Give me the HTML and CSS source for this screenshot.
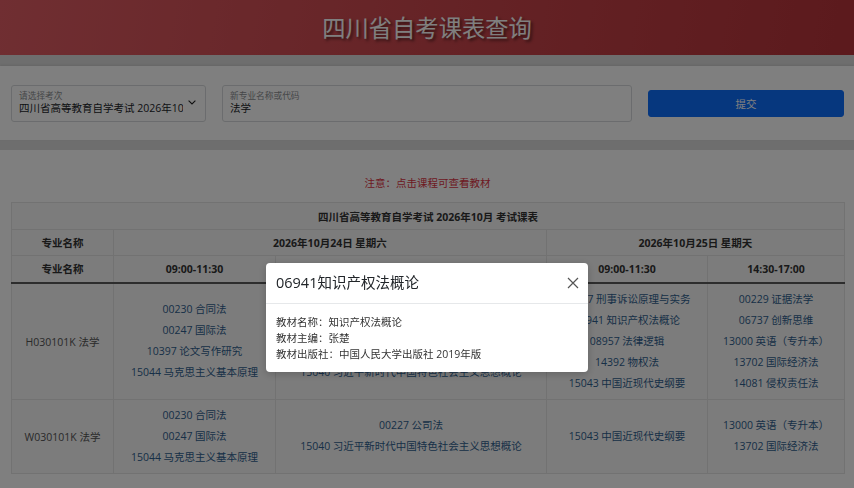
FILE: index.html
```html
<!DOCTYPE html>
<html lang="zh-CN">
<head>
<meta charset="utf-8">
<title>四川省自考课表查询</title>
<link rel="stylesheet" href="styles.css">
</head>
<body>
<header class="topbar">
  <h1 class="site-title">四川省自考课表查询</h1>
</header>

<section class="search-panel">
  <div class="field field-select">
    <span class="field-label">请选择考次</span>
    <span class="field-value select-value">四川省高等教育自学考试 2026年10月</span>
    <svg class="chevron" viewBox="0 0 8 5" width="8" height="5"><path d="M0.6 0.6 L4 4 L7.4 0.6" fill="none" stroke="#222" stroke-width="1.1"/></svg>
  </div>
  <div class="field field-input">
    <span class="field-label">新专业名称或代码</span>
    <span class="field-value">法学</span>
  </div>
  <button class="submit-btn" type="button">提交</button>
</section>

<main class="content">
  <p class="notice">注意：点击课程可查看教材</p>
  <table class="schedule">
    <colgroup>
      <col class="c-major"><col class="c-d1a"><col class="c-d1b"><col class="c-d2a"><col class="c-d2b">
    </colgroup>
    <thead>
      <tr class="r-title"><th colspan="5">四川省高等教育自学考试 2026年10月 考试课表</th></tr>
      <tr class="r-date"><th>专业名称</th><th colspan="2">2026年10月24日 星期六</th><th colspan="2">2026年10月25日 星期天</th></tr>
      <tr class="r-time"><th>专业名称</th><th>09:00-11:30</th><th>14:30-17:00</th><th>09:00-11:30</th><th>14:30-17:00</th></tr>
    </thead>
    <tbody>
      <tr>
        <td class="major">H030101K 法学</td>
        <td><a class="course">00230 合同法</a><a class="course">00247 国际法</a><a class="course">10397 论文写作研究</a><a class="course">15044 马克思主义基本原理</a></td>
        <td><a class="course">00227 公司法</a><a class="course">00228 环境与资源保护法学</a><a class="course">00249 国际私法</a><a class="course">15040 习近平新时代中国特色社会主义思想概论</a></td>
        <td><a class="course">00257 刑事诉讼原理与实务</a><a class="course">06941 知识产权法概论</a><a class="course">08957 法律逻辑</a><a class="course">14392 物权法</a><a class="course">15043 中国近现代史纲要</a></td>
        <td><a class="course">00229 证据法学</a><a class="course">06737 创新思维</a><a class="course">13000 英语（专升本）</a><a class="course">13702 国际经济法</a><a class="course">14081 侵权责任法</a></td>
      </tr>
      <tr>
        <td class="major">W030101K 法学</td>
        <td><a class="course">00230 合同法</a><a class="course">00247 国际法</a><a class="course">15044 马克思主义基本原理</a></td>
        <td><a class="course">00227 公司法</a><a class="course">15040 习近平新时代中国特色社会主义思想概论</a></td>
        <td><a class="course">15043 中国近现代史纲要</a></td>
        <td><a class="course">13000 英语（专升本）</a><a class="course">13702 国际经济法</a></td>
      </tr>
    </tbody>
  </table>
</main>

<div class="backdrop"></div>
<div class="modal" role="dialog">
  <div class="modal-head">
    <h2 class="modal-title">06941知识产权法概论</h2>
    <svg class="modal-close" viewBox="0 0 12 12" width="12" height="12"><path d="M1 1 L11 11 M11 1 L1 11" stroke="#555" stroke-width="1.2" fill="none"/></svg>
  </div>
  <div class="modal-body">
    <div>教材名称：知识产权法概论</div>
    <div>教材主编：张楚</div>
    <div>教材出版社：中国人民大学出版社 2019年版</div>
  </div>
</div>
</body>
</html>
```
FILE: styles.css
```css
* { box-sizing: border-box; }
html, body { margin: 0; padding: 0; }
body {
  background: #dcdcdc;
  font-family: "Open Sans", "Noto Sans CJK SC", sans-serif;
  font-size: 10.5px;
  color: #212529;
  height: 488px;
  overflow: hidden;
  display: flex;
  flex-direction: column;
}

.topbar {
  flex: none;
  height: 55px;
  background: linear-gradient(100deg, #e05d64 0%, #cc474d 50%, #b8343a 100%);
  display: flex;
  align-items: center;
  justify-content: center;
}
.site-title {
  margin: 0;
  font-family: "Noto Sans CJK SC", sans-serif;
  font-weight: 400;
  font-size: 23.3px;
  color: #ffffff;
  text-shadow: 2px 2px 3px rgba(0,0,0,0.55);
  line-height: 1;
}

.search-panel {
  flex: none;
  margin-top: 11px;
  height: 74px;
  background: #fff;
  box-shadow: 0 -1px 2px rgba(0,0,0,0.08);
  display: grid;
  grid-template-columns: 195px 410px 196px;
  column-gap: 16px;
  align-items: center;
  padding: 0 10px 0 11px;
}
.field {
  position: relative;
  height: 37px;
  border: 1px solid #d6d9dc;
  border-radius: 3px;
  padding: 4px 8px 4px 7px;
  display: flex;
  flex-direction: column;
  overflow: hidden;
}
.field-label {
  font-family: "Noto Sans CJK SC", sans-serif;
  font-size: 8.7px;
  line-height: 11px;
  color: #8a8d90;
  white-space: nowrap;
}
.field-value {
  font-size: 10.5px;
  line-height: 15px;
  color: #212529;
  white-space: nowrap;
  overflow: hidden;
}
.select-value {
  width: 164px;
}
.chevron {
  position: absolute;
  right: 9px;
  top: 14px;
}
.submit-btn {
  height: 27px;
  background: #0d6efd;
  border: 1px solid #0d6efd;
  border-radius: 3px;
  color: #fff;
  font-family: "Noto Sans CJK SC", sans-serif;
  font-size: 10.5px;
  padding: 0;
}

.content {
  flex: 1;
  margin-top: 10px;
  background: #fff;
  padding: 25px 10px 0 11px;
  overflow: hidden;
}
.notice {
  margin: 0 0 11px;
  text-align: center;
  color: #dc3545;
  font-family: "Noto Sans CJK SC", sans-serif;
  font-size: 10.5px;
  line-height: 16px;
}

.schedule {
  width: 833px;
  border-collapse: collapse;
  table-layout: fixed;
  background: #f8f8f8;
}
.c-major { width: 102px; }
.c-d1a { width: 162px; }
.c-d1b { width: 271px; }
.c-d2a { width: 161px; }
.c-d2b { width: 137px; }
.schedule th, .schedule td {
  border: 1px solid #e4e4e4;
  text-align: center;
  vertical-align: middle;
  padding: 0 4px;
}
.schedule th {
  font-weight: 700;
  color: #333;
  font-size: 10.5px;
}
.r-title th { height: 27px; }
.r-date th { height: 26px; }
.r-time th { height: 27px; border-bottom: 2px solid #5a5a5a; }
.schedule td { padding: 5px 4px; }
.major { color: #555; }
.course {
  display: block;
  line-height: 21px;
  color: #2f5f8f;
  text-decoration: none;
  white-space: nowrap;
}

.backdrop {
  position: fixed;
  inset: 0;
  background: rgba(0,0,0,0.5);
}
.modal {
  position: fixed;
  left: 266px;
  top: 263px;
  width: 322px;
  background: #fff;
  border-radius: 4px;
  box-shadow: 0 2px 8px rgba(0,0,0,0.2);
}
.modal-head {
  height: 41px;
  border-bottom: 1px solid #e6e8ea;
  display: flex;
  align-items: center;
  justify-content: space-between;
  padding: 0 9px 0 10px;
}
.modal-title {
  margin: 0;
  font-weight: 400;
  font-size: 14.5px;
  color: #212529;
  line-height: 1;
}
.modal-close { display: block; }
.modal-body {
  padding: 10px;
  font-size: 10.5px;
  line-height: 16px;
  color: #333;
}
```
